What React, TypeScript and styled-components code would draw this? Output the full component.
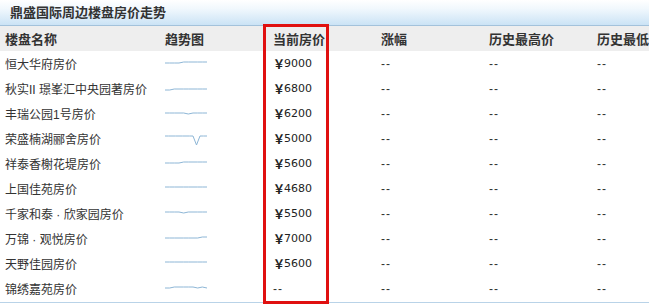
import React from "react";
import styled, { createGlobalStyle } from "styled-components";

const GlobalStyle = createGlobalStyle`
  html, body {
    margin: 0;
    padding: 0;
    background: #fff;
  }
  body {
    font-family: "Liberation Sans", "Noto Sans CJK SC", sans-serif;
    color: #333;
  }
`;

type Row = {
  name: string;
  price: string;
  trend: number[];
};

// trend points are y offsets on a 42 x 14 canvas
const rows: Row[] = [
  { name: "恒大华府房价", price: "9000", trend: [6, 6, 6, 6, 5, 5, 5, 5, 5, 5] },
  { name: "秋实II 璟峯汇中央园著房价", price: "6800", trend: [8, 8, 7, 7, 7, 7, 7, 7, 7, 7] },
  { name: "丰瑞公园1号房价", price: "6200", trend: [6, 6, 6, 6, 6, 7, 6, 6, 6, 6] },
  { name: "荣盛楠湖郦舍房价", price: "5000", trend: [4, 4, 4, 4, 4, 4, 4, 4, 4, 13, 4, 4, 4] },
  { name: "祥泰香榭花堤房价", price: "5600", trend: [6, 6, 6, 6, 5, 5, 5, 5, 5, 5] },
  { name: "上国佳苑房价", price: "4680", trend: [5, 5, 5, 5, 5, 5, 5, 5, 5, 5] },
  { name: "千家和泰 · 欣家园房价", price: "5500", trend: [5, 5, 5, 5, 6, 5, 5, 5, 5, 5] },
  { name: "万锦 · 观悦房价", price: "7000", trend: [6, 6, 6, 6, 6, 6, 6, 6, 5, 5] },
  { name: "天野佳园房价", price: "5600", trend: [5, 5, 5, 5, 5, 5, 5, 5, 5, 5] },
  { name: "锦绣嘉苑房价", price: "", trend: [6, 6, 5, 5, 5, 5, 5, 6, 5, 6] },
];

const Spark = ({ points }: { points: number[] }) => {
  const step = 42 / (points.length - 1);
  const d = points
    .map((y, i) => `${i === 0 ? "M" : "L"}${(i * step).toFixed(1)} ${y}`)
    .join(" ");
  return (
    <svg width="42" height="14" viewBox="0 0 42 14">
      <path d={d} fill="none" stroke="#8db6d6" strokeWidth="1" />
    </svg>
  );
};

const App = () => {
  return (
    <Panel>
      <GlobalStyle />
      <TitleBar>鼎盛国际周边楼盘房价走势</TitleBar>
      <Table>
        <HeadRow>
          <HeadCell>楼盘名称</HeadCell>
          <HeadCell>趋势图</HeadCell>
          <HeadCell>当前房价</HeadCell>
          <HeadCell>涨幅</HeadCell>
          <HeadCell>历史最高价</HeadCell>
          <HeadCell>历史最低价</HeadCell>
        </HeadRow>
        {rows.map((r) => (
          <BodyRow key={r.name}>
            <Cell>{r.name}</Cell>
            <Cell>
              <Spark points={r.trend} />
            </Cell>
            <Cell>
              {r.price ? (
                <Price>
                  <Yen>￥</Yen>
                  {r.price}
                </Price>
              ) : (
                <Dash>--</Dash>
              )}
            </Cell>
            <Cell>
              <Dash>--</Dash>
            </Cell>
            <Cell>
              <Dash>--</Dash>
            </Cell>
            <Cell>
              <Dash>--</Dash>
            </Cell>
          </BodyRow>
        ))}
        <Highlight />
      </Table>
    </Panel>
  );
};

export default App;

const Panel = styled.div`
  width: 649px;
  height: 307px;
  overflow: hidden;
  background: #fff;
`;

const TitleBar = styled.div`
  height: 25px;
  line-height: 26px;
  padding-left: 10px;
  font-size: 13px;
  font-weight: bold;
  color: #333;
  background: linear-gradient(#ffffff, #f1f8fd 35%, #cbe3f5);
  border-bottom: 1px solid #a3c2db;
`;

const Table = styled.div`
  position: relative;
  border-bottom: 1px solid #b9d3e8;
  padding-bottom: 1px;
`;

const RowBase = styled.div`
  display: grid;
  grid-template-columns: 160px 108px 108px 108px 108px 108px;
  height: 25px;
  align-items: center;
`;

const HeadRow = styled(RowBase)`
  background: #eeeeee;
`;

const BodyRow = styled(RowBase)``;

const HeadCell = styled.div`
  font-size: 13px;
  font-weight: bold;
  color: #333;
  white-space: nowrap;
  padding-left: 5px;
`;

const Cell = styled.div`
  font-size: 12px;
  color: #333;
  white-space: nowrap;
  padding-left: 5px;
  display: flex;
  align-items: center;
`;

const Price = styled.span`
  font-family: "DejaVu Sans", "Noto Sans CJK SC", sans-serif;
  font-size: 11px;
  color: #222;
  display: inline-flex;
  align-items: center;
`;

const Yen = styled.span`
  font-family: "Noto Sans CJK SC", sans-serif;
  font-size: 12px;
  font-weight: bold;
  width: 11px;
`;

const Dash = styled.span`
  font-size: 12px;
  color: #333;
  letter-spacing: 1px;
`;

// red frame drawn around the current-price column
const Highlight = styled.div`
  position: absolute;
  left: 263px;
  top: -2px;
  width: 60px;
  height: 274px;
  border: 3px solid #e01010;
  pointer-events: none;
`;
